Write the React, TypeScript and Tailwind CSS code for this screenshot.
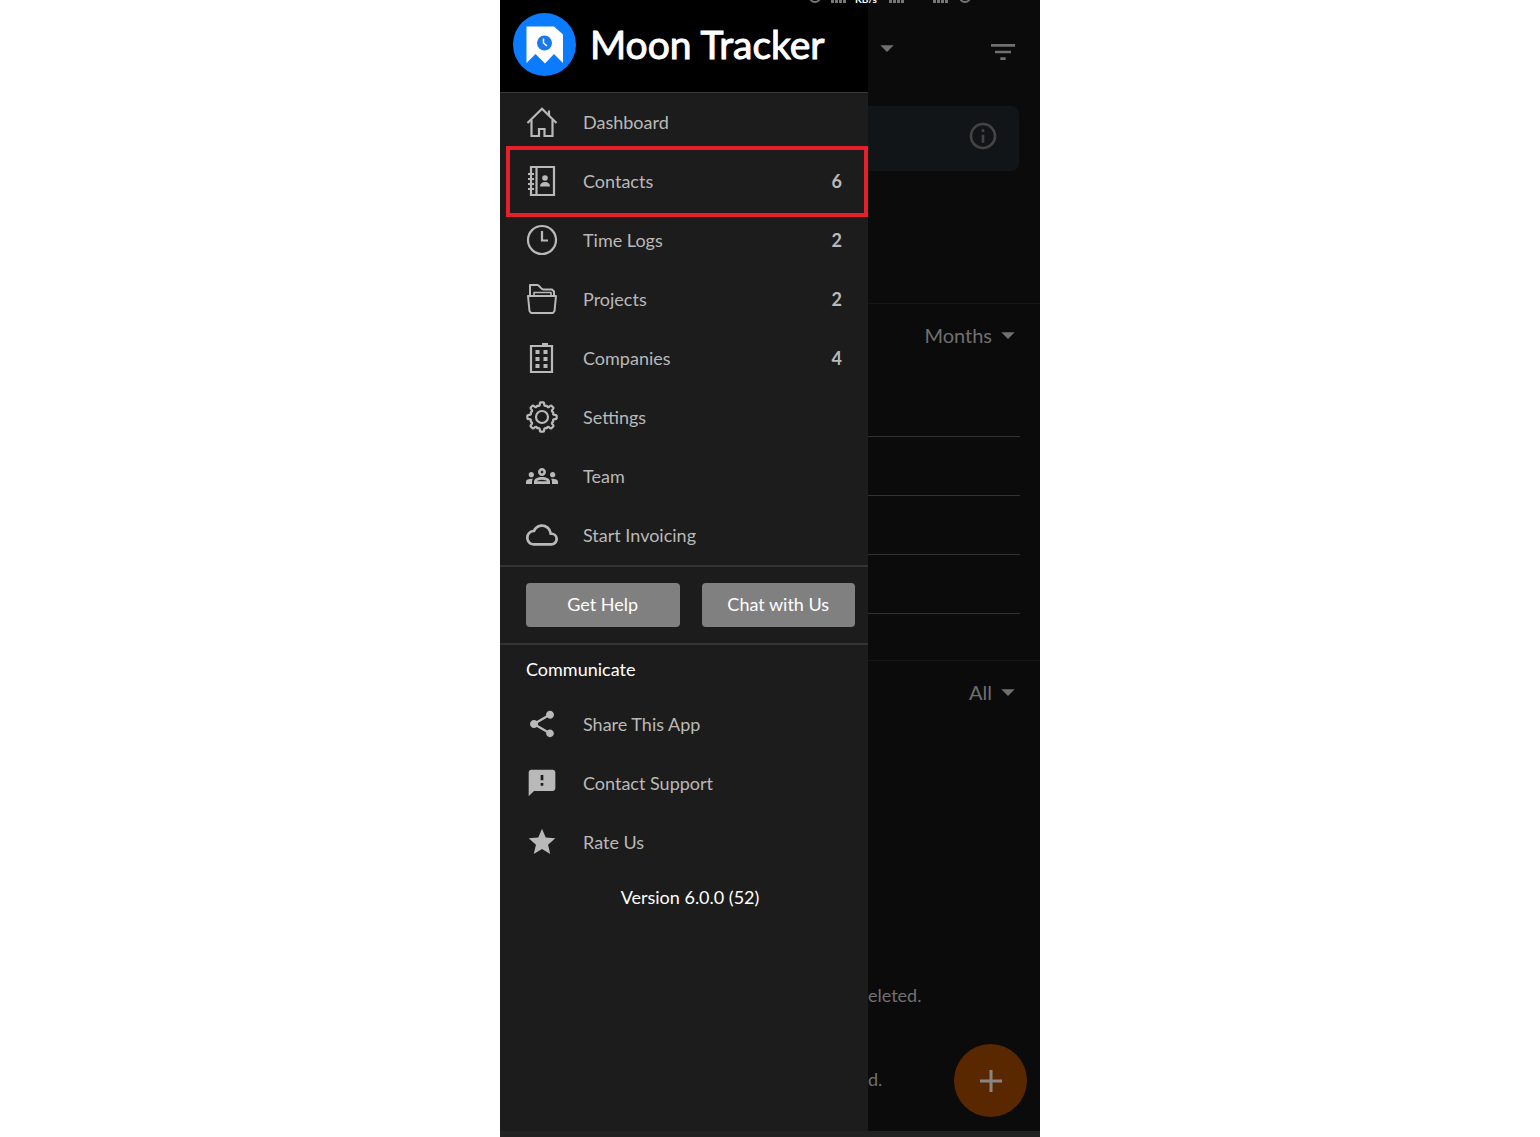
import React from 'react';
import {
  MdArrowDropDown,
  MdFeedback,
  MdFilterList,
  MdInfoOutline,
  MdOutlineCloud,
  MdShare,
  MdStar,
} from 'react-icons/md';

const HomeIcon = () => (
  <svg viewBox="0 0 32 32" className="size-8" fill="none" stroke="currentColor" strokeWidth="2.2">
    <path d="M1.5 17 16 2.8 30.5 17" />
    <path d="M23 9.5V4.500" />
    <path d="M5.5 14v16H13v-7h5.5v7h8V14" />
  </svg>
);

const ContactsIcon = () => (
  <svg viewBox="0 0 32 32" className="size-8" fill="none" stroke="currentColor" strokeWidth="2.2">
    <path d="M5 2h23v28H5z" />
    <path d="M10.5 2v28" />
    <path d="M2 9h6M2 14h6M2 19h6M2 24h6" />
    <circle cx="19" cy="13" r="2.8" fill="currentColor" stroke="none" />
    <path d="M14 21.5c0-3 2-4.5 5-4.5s5 1.5 5 4.5z" fill="currentColor" stroke="none" />
  </svg>
);

const ClockIcon = () => (
  <svg viewBox="0 0 32 32" className="size-8" fill="none" stroke="currentColor" strokeWidth="2.2">
    <circle cx="16" cy="16" r="14" />
    <path d="M16 7v9.5h6" />
  </svg>
);

const FolderIcon = () => (
  <svg viewBox="0 0 32 32" className="size-8" fill="none" stroke="currentColor" strokeWidth="2" strokeLinejoin="round">
    <path d="M4 12V2h7.5c2 0 3 4.5 6 4.5H26l2 2V12" />
    <path d="M8 12V9.500h17V12" strokeWidth="1.6" />
    <path d="M2 13h28l-1.5 15-1.5 2H5l-1.5-2z" />
  </svg>
);

const BuildingIcon = () => (
  <svg viewBox="0 0 32 32" className="size-8" fill="none" stroke="currentColor" strokeWidth="2.2">
    <path d="M5 4h21v26H5z" />
    <path d="M16 2.500h6" strokeWidth="3" />
    <path d="M11.500 8v18M19.500 8v18" strokeWidth="4" strokeDasharray="4 3" />
  </svg>
);

const teeth = [0, 45, 90, 135, 180, 225, 270, 315];

// Eight-tooth gear outline, one tooth and the valley after it per step
const gearPath =
  teeth
    .map((deg, i) => {
      const at = (offset: number, r: number) => {
        const a = ((deg + offset) * Math.PI) / 180;
        return `${(16 + r * Math.sin(a)).toFixed(2)} ${(16 - r * Math.cos(a)).toFixed(2)}`;
      };
      return `${i === 0 ? 'M' : 'L'}${at(-10, 12.5)} Q${at(-9, 14.7)} ${at(-5, 14.7)} L${at(5, 14.7)} Q${at(9, 14.7)} ${at(10, 12.5)} Q${at(14, 10.8)} ${at(20, 12)} L${at(25, 12)} Q${at(31, 10.8)} ${at(35, 12.5)}`;
    })
    .join(' ') + 'Z';

const GearIcon = () => (
  <svg viewBox="0 0 32 32" className="size-8" fill="none" stroke="currentColor" strokeWidth="2.2" strokeLinejoin="round">
    <path d={gearPath} />
    <circle cx="16" cy="16" r="6" />
  </svg>
);

const TeamIcon = () => (
  <svg viewBox="0 0 24 24" className="size-8" fill="currentColor">
    <path d="M4 13c1.100 0 2-.9 2-2s-.9-2-2-2-2 .9-2 2 .9 2 2 2zm1.130 1.100C4.760 14.040 4.390 14 4 14c-.99 0-1.930.21-2.780.58C.48 14.900 0 15.620 0 16.430V18h4.500v-1.610c0-.83.23-1.610.63-2.290zM20 13c1.100 0 2-.9 2-2s-.9-2-2-2-2 .9-2 2 .9 2 2 2zm4 3.430c0-.81-.48-1.530-1.220-1.850C21.930 14.210 20.990 14 20 14c-.39 0-.76.04-1.130.1.400.68.63 1.460.63 2.290V18H24v-1.570zm-7.760-2.780c-1.170-.52-2.610-.9-4.240-.9s-3.070.39-4.240.9C6.680 14.130 6 15.210 6 16.390V18h12v-1.610c0-1.180-.68-2.260-1.760-2.740zM8.070 16c.09-.23.13-.39.91-.69.97-.38 1.990-.56 3.020-.56s2.050.18 3.020.56c.77.3.81.46.91.69H8.070zM12 8c.55 0 1 .45 1 1s-.45 1-1 1-1-.45-1-1 .45-1 1-1m0-2c-1.660 0-3 1.340-3 3s1.340 3 3 3 3-1.340 3-3-1.340-3-3-3z" />
  </svg>
);

const Logo = () => (
  <svg viewBox="0 0 64 64" className="size-16 shrink-0" role="img" aria-label="Moon Tracker logo">
    <circle cx="32.5" cy="32.5" r="31.5" fill="#0b7bff" />
    <path d="M14.5 14.5H42l9 8V51l-9-9-9 9.5-9.500-9.500-9 9z" fill="#fff" />
    <circle cx="32.5" cy="31" r="7.5" fill="#1a78ea" />
    <path d="M31.5 26.5V31l3.500 3" fill="none" stroke="#fff" strokeWidth="1.5" />
  </svg>
);

const SignalIcon = () => (
  <svg viewBox="0 0 16 10" className="h-2.5 w-4" fill="currentColor">
    <path d="M0 7h3v3H0zM4 5h3v5H4zM8 3h3v7H8zM12 1h3v9h-3z" />
  </svg>
);

// Only the lower edge of the phone's status bar is on screen
const StatusBar = () => (
  <div
    aria-hidden="true"
    className="absolute inset-x-0 top-0 flex h-[3px] items-end justify-end overflow-hidden pr-[69px] text-[#777777]"
  >
    <span className="mr-2.5 size-3 shrink-0 rounded-full border-2" />
    <SignalIcon />
    <span className="ml-2 mr-3 text-[10px] font-bold leading-[8px] text-white">KB/s</span>
    <SignalIcon />
    <span className="w-7" />
    <SignalIcon />
    <span className="ml-2.5 size-3 shrink-0 rounded-full border-2" />
  </div>
);

const menuItems = [
  { label: 'Dashboard', icon: <HomeIcon /> },
  { label: 'Contacts', icon: <ContactsIcon />, count: 6, highlighted: true },
  { label: 'Time Logs', icon: <ClockIcon />, count: 2 },
  { label: 'Projects', icon: <FolderIcon />, count: 2 },
  { label: 'Companies', icon: <BuildingIcon />, count: 4 },
  { label: 'Settings', icon: <GearIcon /> },
  { label: 'Team', icon: <TeamIcon /> },
  { label: 'Start Invoicing', icon: <MdOutlineCloud className="size-8" /> },
];

const communicateItems = [
  { label: 'Share This App', icon: <MdShare className="size-8" /> },
  { label: 'Contact Support', icon: <MdFeedback className="size-8" /> },
  { label: 'Rate Us', icon: <MdStar className="size-8" /> },
];

type MenuRowProps = {
  label: string;
  icon: React.ReactNode;
  count?: number;
  highlighted?: boolean;
};

const MenuRow: React.FC<MenuRowProps> = ({ label, icon, count, highlighted }) => (
  <li className="relative">
    <a href="#" className="flex h-[59px] items-center px-[26px] pb-0.5 text-lg text-[#b9b9b9]">
      <span className="flex w-8 shrink-0 justify-center">{icon}</span>
      <span className="ml-[25px] flex-1 whitespace-nowrap">{label}</span>
      {count !== undefined && <span className="font-bold">{count}</span>}
    </a>
    {highlighted && (
      <span className="pointer-events-none absolute -inset-y-1.5 left-1.5 right-0 border-4 border-[#e5202a]" />
    )}
  </li>
);

const Drawer = () => (
  <aside className="flex w-[69%] max-w-[368px] shrink-0 flex-col bg-[#1c1c1c]">
    <header className="flex h-[93px] items-start gap-3.5 border-b border-[#3a3a3a] bg-black px-3 pt-3">
      <Logo />
      <h1 className="whitespace-nowrap text-[39px] leading-16 text-white [-webkit-text-stroke:1px_white]">
        Moon Tracker
      </h1>
    </header>
    <nav aria-label="Main">
      <ul>
        {menuItems.map((item) => (
          <MenuRow key={item.label} {...item} />
        ))}
      </ul>
    </nav>
    <div className="flex gap-[22px] border-y-2 border-[#333333] py-4 pl-[26px] pr-[13px]">
      <button type="button" className="h-11 flex-1 rounded-[4px] bg-[#808080] pb-0.5 text-lg text-white">
        Get Help
      </button>
      <button type="button" className="h-11 flex-1 rounded-[4px] bg-[#808080] pb-0.5 text-lg text-white">
        Chat with Us
      </button>
    </div>
    <h2 className="h-[50px] px-[26px] text-lg leading-[48px] text-white">Communicate</h2>
    <ul>
      {communicateItems.map((item) => (
        <MenuRow key={item.label} {...item} />
      ))}
    </ul>
    <p className="pl-3 text-center text-lg leading-[50px] text-white">Version 6.0.0 (52)</p>
  </aside>
);

const Dashboard = () => (
  <main className="flex min-w-0 flex-1 flex-col bg-[#0b0b0b] text-xl text-[#707070]">
    <div className="flex h-[106px] items-start justify-between pl-[3px] pr-[21px] pt-8">
      <button type="button" aria-label="Choose account">
        <MdArrowDropDown className="size-8" />
      </button>
      <button type="button" aria-label="Filter" className="pt-1">
        <MdFilterList className="size-8" />
      </button>
    </div>
    <div className="mr-[21px] flex h-[65px] items-center justify-end rounded-r-lg bg-[#111518] pb-1.5 pr-5 text-[#444444]">
      <MdInfoOutline className="size-8" />
    </div>
    <section className="mt-[132px] border-t border-[#161616]">
      <div className="flex h-[66px] items-center justify-end pb-1 pr-4">
        <button type="button" className="flex items-center">
          Months
          <MdArrowDropDown className="size-8" />
        </button>
      </div>
      <ul className="mb-[46px] mr-5 mt-2">
        {[1, 2, 3, 4].map((n) => (
          <li key={n} className="h-[59px] border-b border-[#333333]" />
        ))}
      </ul>
    </section>
    <section className="border-t border-[#161616]">
      <div className="flex h-[66px] items-center justify-end pb-1 pr-4">
        <button type="button" className="flex items-center">
          All
          <MdArrowDropDown className="size-8" />
        </button>
      </div>
      <div className="text-lg leading-7">
        <p className="mt-[254px]">eleted.</p>
        <p className="mt-14">d.</p>
      </div>
    </section>
  </main>
);

const App: React.FC = () => {
  return (
    <div className="flex min-h-screen justify-center bg-white font-['Lato',sans-serif]">
      <div className="relative flex w-full max-w-[540px] flex-col">
        <div className="flex flex-1">
          <Drawer />
          <Dashboard />
        </div>
        <div className="h-1.5 bg-[#222222]" />
        <StatusBar />
        <button
          type="button"
          aria-label="Add"
          className="absolute bottom-5 right-[13px] flex size-[73px] items-center justify-center rounded-full bg-[#5a2800] text-[#8a8583]"
        >
          <svg viewBox="0 0 24 24" className="size-6" stroke="currentColor" strokeWidth="3">
            <path d="M12 1v22M1 12h22" />
          </svg>
        </button>
      </div>
    </div>
  );
};

export default App;
